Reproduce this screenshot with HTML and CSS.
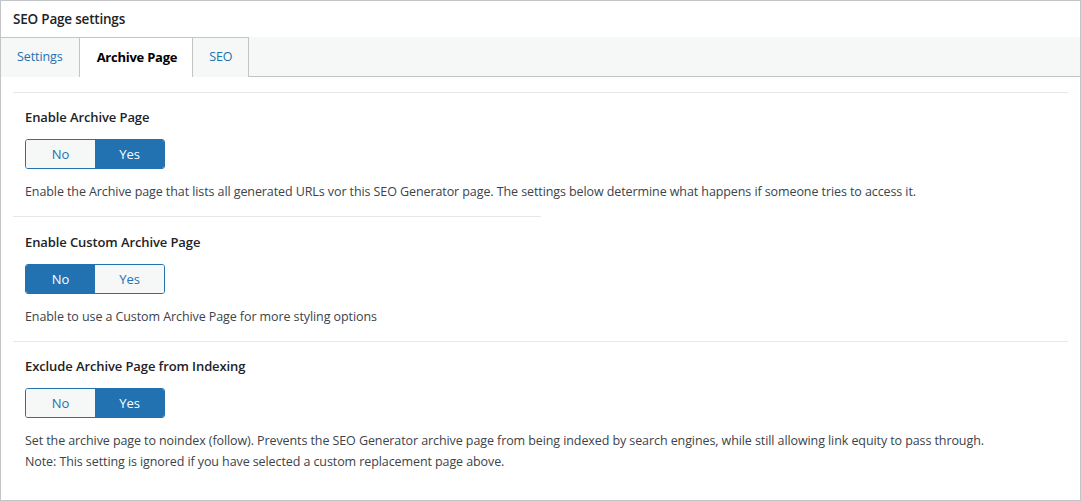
FILE: index.html
```html
<!DOCTYPE html>
<html lang="en">
<head>
<meta charset="utf-8">
<title>SEO Page settings</title>
<link rel="stylesheet" href="styles.css">
</head>
<body>
<div class="panel">
  <div class="panel-header">SEO Page settings</div>
  <div class="tabbar">
    <div class="tab">Settings</div>
    <div class="tab active">Archive Page</div>
    <div class="tab">SEO</div>
  </div>
  <div class="content">
    <div class="divider"></div>
    <div class="field">
      <div class="field-title">Enable Archive Page</div>
      <div class="toggle">
        <span class="opt">No</span><span class="opt on">Yes</span>
      </div>
      <p class="desc">Enable the Archive page that lists all generated URLs vor this SEO Generator page. The settings below determine what happens if someone tries to access it.</p>
    </div>
    <div class="divider half"></div>
    <div class="field">
      <div class="field-title">Enable Custom Archive Page</div>
      <div class="toggle">
        <span class="opt on">No</span><span class="opt">Yes</span>
      </div>
      <p class="desc">Enable to use a Custom Archive Page for more styling options</p>
    </div>
    <div class="divider"></div>
    <div class="field">
      <div class="field-title">Exclude Archive Page from Indexing</div>
      <div class="toggle">
        <span class="opt">No</span><span class="opt on">Yes</span>
      </div>
      <p class="desc">Set the archive page to noindex (follow). Prevents the SEO Generator archive page from being indexed by search engines, while still allowing link equity to pass through.<br>Note: This setting is ignored if you have selected a custom replacement page above.</p>
    </div>
  </div>
</div>
</body>
</html>
```
FILE: styles.css
```css
* { box-sizing: border-box; }
html, body { margin: 0; padding: 0; background: #fff; }
body {
  font-family: "Open Sans", "Noto Sans", sans-serif;
  font-size: 12.5px;
  letter-spacing: -0.09px;
  color: #3c434a;
}
.panel {
  width: 1081px;
  height: 501px;
  border: 1px solid #c3c4c7;
  background: #fff;
}
.panel-header {
  height: 36px;
  line-height: 36px;
  padding-left: 12px;
  font-size: 13.5px;
  letter-spacing: -0.2px;
  font-weight: 600;
  color: #1d2327;
}
.tabbar {
  display: flex;
  height: 40px;
  background: #f6f7f7;
  border-bottom: 1px solid #c3c4c7;
}
.tab {
  height: 40px;
  line-height: 38px;
  border-top: 1px solid #c3c4c7;
  border-right: 1px solid #c3c4c7;
  padding: 0 16px 0 16px;
  color: #2271b1;
  background: #f6f7f7;
}
.tab.active {
  background: #fff;
  color: #000;
  font-weight: 700;
  font-size: 13px;
  letter-spacing: -0.25px;
  padding: 0 15px 0 17px;
}
.content {
  padding: 15px 12px 0 12px;
}
.divider {
  height: 1px;
  background: #e8e8e8;
}
.divider.half {
  width: 50%;
  margin-bottom: 1px;
}
.field {
  padding: 14px 12px 14px 12px;
}
.field-title {
  line-height: 20px;
  font-size: 13px;
  letter-spacing: -0.1px;
  font-weight: 600;
  color: #1d2327;
}
.toggle {
  display: inline-flex;
  margin-top: 12px;
  height: 30px;
  border: 1px solid #2271b1;
  border-radius: 3px;
  overflow: hidden;
}
.opt {
  width: 69px;
  line-height: 28px;
  text-align: center;
  font-size: 13px;
  background: #f6f7f7;
  color: #2271b1;
}
.opt.on {
  background: #2271b1;
  color: #fff;
}
.desc {
  margin: 12px 0 0 0;
  line-height: 21px;
}
```
